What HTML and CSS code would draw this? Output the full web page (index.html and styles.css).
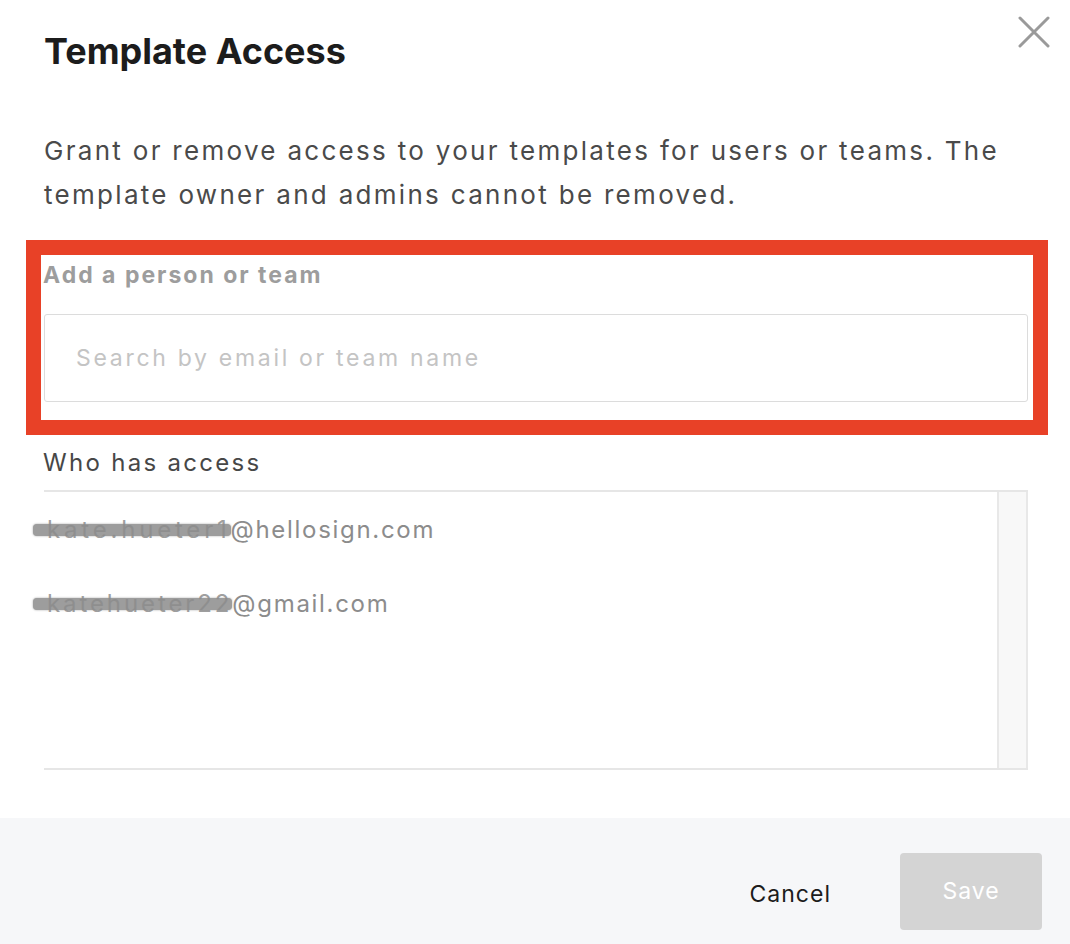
FILE: index.html
```html
<!DOCTYPE html>
<html lang="en">

<head>
    <meta charset="UTF-8">
    <meta name="viewport" content="width=device-width, initial-scale=1.0">
    <title>Template Access</title>
    <link rel="stylesheet" href="styles.css">
</head>

<body>
    <div class="modal">
        <div class="modal-body">
            <div class="modal-header">
                <h1>Template Access</h1>
                <button class="close-btn" aria-label="Close">
                    <svg width="32" height="32" viewBox="0 0 32 32">
                        <path d="M2 2 L30 30 M30 2 L2 30" stroke="#9a9a9a" stroke-width="3" stroke-linecap="round" fill="none"/>
                    </svg>
                </button>
            </div>

            <p class="intro">Grant or remove access to your templates for users or teams. The template owner and admins cannot be removed.</p>

            <!-- Ô được khoanh đỏ -->
            <div class="add-field">
                <label class="field-label" for="search">Add a person or team</label>
                <input id="search" class="search-input" type="text" placeholder="Search by email or team name">
            </div>

            <div class="section-title">Who has access</div>
            <div class="access-list">
                <ul class="access-items">
                    <li><span class="redacted">kate.hueter1</span>@hellosign.com</li>
                    <li><span class="redacted redacted-tight">katehueter22</span>@gmail.com</li>
                </ul>
                <div class="scroll-track"></div>
            </div>
        </div>

        <div class="modal-footer">
            <button class="btn-cancel">Cancel</button>
            <button class="btn-save" disabled>Save</button>
        </div>
    </div>
</body>

</html>
```

FILE: styles.css
```css
body {
    font-family: Inter, Lato, sans-serif;
    margin: 0;
    padding: 0;
    background-color: #fff;
    color: #4a4a4a;
}

.modal {
    width: 1070px;
    height: 944px;
    display: flex;
    flex-direction: column;
    overflow: hidden;
}

.modal-body {
    flex: 1;
    padding: 0 42px 0 44px;
}

.modal-header {
    display: flex;
    justify-content: space-between;
    align-items: flex-start;
}

h1 {
    margin: 28px 0 0;
    font-size: 36px;
    font-weight: 700;
    color: #1c1c1c;
    line-height: 46px;
}

.close-btn {
    margin: 16px -22px 0 0;
    padding: 0;
    border: none;
    background: none;
    cursor: pointer;
}

.intro {
    margin: 55px 0 0;
    font-size: 26px;
    line-height: 44px;
    letter-spacing: 2.3px;
    color: #4a4a4a;
}

/* Ô được khoanh đỏ */
.add-field {
    position: relative;
    margin-top: 44px;
    padding-bottom: 18px;
}

.add-field::before {
    content: "";
    position: absolute;
    top: -21px;
    left: -18px;
    right: -20px;
    bottom: -15px;
    border: 15px solid #e84127;
    pointer-events: none;
}

.field-label {
    display: block;
    font-size: 23px;
    font-weight: 700;
    color: #9d9d9d;
    letter-spacing: 2px;
    line-height: 28px;
    margin-left: -1px;
}

.search-input {
    display: block;
    box-sizing: border-box;
    width: 100%;
    height: 88px;
    margin-top: 25px;
    padding: 0 31px;
    border: 1px solid #dcdcdc;
    border-radius: 3px;
    font-family: inherit;
    font-size: 23px;
    letter-spacing: 2.7px;
    color: #4a4a4a;
    outline: none;
}

.search-input::placeholder {
    color: #c4c4c4;
}

.section-title {
    margin-top: 28px;
    font-size: 24px;
    line-height: 30px;
    letter-spacing: 2.3px;
    color: #474747;
    margin-left: -1px;
}

.access-list {
    display: flex;
    height: 276px;
    margin-top: 12px;
    border-top: 2px solid #e6e6e6;
    border-bottom: 2px solid #e6e6e6;
}

.access-items {
    flex: 1;
    list-style: none;
    margin: 0;
    padding: 0;
}

.access-items li {
    font-size: 24px;
    line-height: 30px;
    letter-spacing: 1.7px;
    color: #8c8c8c;
    margin-top: 23px;
    margin-left: 3px;
}

.access-items li + li {
    margin-top: 44px;
}

.redacted {
    position: relative;
    color: #a0a0a0;
    letter-spacing: 3.8px;
}

.redacted-tight {
    letter-spacing: 2.9px;
}

.redacted::after {
    content: "";
    position: absolute;
    left: -14px;
    right: 0;
    top: 9px;
    height: 12px;
    background-color: #8c8c8c;
    border-radius: 4px;
    box-shadow: 0 0 2px #8c8c8c;
    opacity: 0.85;
}

.scroll-track {
    width: 27px;
    background-color: #f8f8f8;
    border-left: 2px solid #e8e8e8;
    border-right: 2px solid #e8e8e8;
}

.modal-footer {
    height: 126px;
    box-sizing: border-box;
    background-color: #f6f7f9;
    display: flex;
    justify-content: flex-end;
    align-items: center;
    padding: 20px 28px 0 0;
    gap: 69px;
}

.btn-cancel {
    border: none;
    background: none;
    font-family: inherit;
    font-size: 23px;
    letter-spacing: 1px;
    color: #1c1c1c;
    padding: 5px 0 0;
    cursor: pointer;
}

.btn-save {
    width: 142px;
    height: 77px;
    border: none;
    border-radius: 4px;
    background-color: #d4d4d4;
    color: #fff;
    font-family: inherit;
    font-size: 23px;
    letter-spacing: 1px;
}
```
